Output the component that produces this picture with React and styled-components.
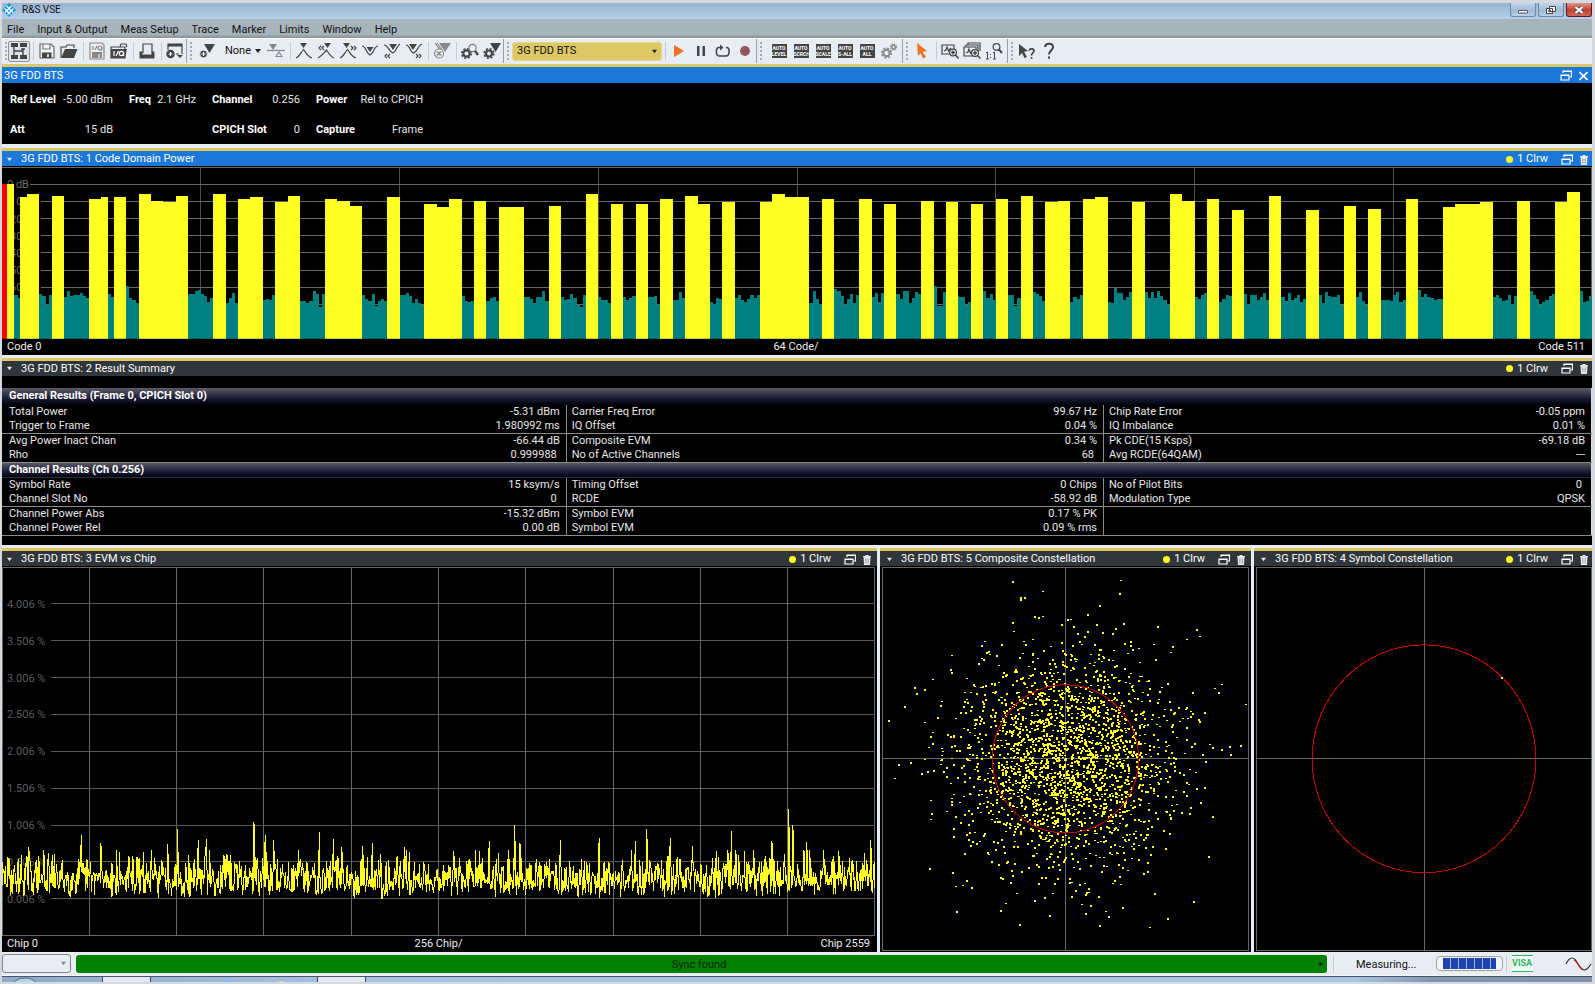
import React from "react";
import styled, { createGlobalStyle, css } from "styled-components";

const GlobalStyle = createGlobalStyle`
  * { box-sizing: border-box; }
  body {
    margin: 0;
    background: #e8edf3;
    font-family: Roboto, "Noto Sans", sans-serif;
    font-size: 11px;
    line-height: 14px;
    color: #111;
  }
  button, select { font: inherit; color: inherit; margin: 0; }
  table { border-collapse: collapse; }
`;

const gold = "#dcc864";
const blue = "#1b78d8";
const yellow = "#ffff26";
const teal = "#008080";
const gridLine = "#686868";
const dark = "#444";

/* ---------- shell ---------- */

const Shell = styled.div`
  min-height: 100vh;
  display: flex;
  flex-direction: column;
  border: solid #d6dade;
  border-width: 3px 3px 2px 2px;
  background: #e8edf3;
`;

const TitleBar = styled.header`
  height: 16px;
  flex: none;
  display: flex;
  align-items: center;
  gap: 6px;
  padding-bottom: 2px;
  background: linear-gradient(#98b4d0, #b6cfea);
`;

const AppName = styled.h1`
  margin: 0;
  flex: 1;
  font-size: 10px;
  font-weight: 400;
`;

const WindowButtons = styled.div`
  display: flex;
  gap: 2px;
  align-self: flex-start;
`;

const WindowButton = styled.button`
  width: 26px;
  height: 14px;
  padding: 0;
  border: 1px solid ${(p) => (p.$close ? "#5c1a20" : "#6f8aa8")};
  border-top: 0;
  border-radius: 0 0 3px 3px;
  background: ${(p) =>
    p.$close
      ? "linear-gradient(#dc9588, #c3402c 55%, #d0695a)"
      : "linear-gradient(#c3d6ec, #9fb9d6 55%, #b7cfe8)"};
  display: flex;
  align-items: center;
  justify-content: center;
`;

const MenuBar = styled.nav`
  height: 19px;
  flex: none;
  display: flex;
  align-items: center;
  gap: 13px;
  padding: 2px 5px 0;
  background: linear-gradient(#a8b4bc 80%, #868f96);
`;

const MenuItem = styled.button`
  border: 0;
  padding: 0;
  background: none;
`;

/* ---------- toolbar ---------- */

const Toolbar = styled.div`
  height: 26px;
  flex: none;
  display: flex;
  padding-bottom: 1px;
  border-top: 1px solid #fff;
`;

const Group = styled.div`
  display: flex;
  align-items: center;
  padding-right: ${(p) => p.$end || 0}px;
  border-right: ${(p) => (p.$last ? 0 : 1)}px solid #98a0a6;
`;

const Grip = styled.span`
  width: 2px;
  height: 19px;
  margin: 0 ${(p) => p.$after || 3}px 0 3px;
  background: repeating-linear-gradient(#a4aab0 0 2px, transparent 2px 4px);
`;

const Sep = styled.span`
  width: 1px;
  height: 18px;
  margin: 0 2px 0 3px;
  background: #c6ccd2;
`;

const ToolButton = styled.button`
  width: 22px;
  height: 21px;
  padding: 0;
  display: flex;
  align-items: center;
  justify-content: center;
  border: 1px solid ${(p) => (p.$active ? "#8c9298" : "transparent")};
  border-radius: 2px;
  background: ${(p) => (p.$active ? "#dfe3e8" : "none")};
  svg { display: block; overflow: visible; flex: none; }
`;

const MarkerSelect = styled.button`
  width: 48px;
  padding: 0 4px 0 8px;
  border: 0;
  background: none;
  display: flex;
  align-items: center;
  justify-content: space-between;
`;

const SelectWrap = styled.label`
  display: grid;
  align-items: center;
  width: ${(p) => p.$width}px;
  height: 19px;
  select, svg { grid-area: 1 / 1; }
  svg { justify-self: end; margin-right: 5px; pointer-events: none; }
`;

const Select = styled.select`
  appearance: none;
  width: 100%;
  height: 19px;
  padding: 0 4px;
  border-radius: 3px;
  border: 1px solid ${(p) => (p.$gold ? "#e4d68c" : "#80868c")};
  background: ${(p) => (p.$gold ? gold : "#e8edf3")};
`;

const AutoLabel = styled.span`
  width: 15px;
  height: 14px;
  padding: 1px 0;
  background: ${dark};
  color: #fff;
  font-size: 5px;
  font-weight: 700;
  line-height: 6px;
  text-align: center;
  overflow: hidden;
  flex: none;
`;

/* ---------- panels ---------- */

const Workspace = styled.main`
  flex: 1;
  display: flex;
  flex-direction: column;
  gap: 3px;
  min-height: 0;
`;

const Panel = styled.section`
  display: flex;
  flex-direction: column;
  min-width: 0;
  min-height: 0;
  background: #000;
  border-top: 3px solid ${gold};
  flex: ${(p) => p.$flex || "none"};
`;

const PanelHead = styled.div`
  height: ${(p) => (p.$channel ? 16 : 15)}px;
  flex: none;
  display: flex;
  align-items: center;
  padding: 1px ${(p) => p.$right || 4}px 0 ${(p) => p.$left || 5}px;
  color: #fff;
  background: ${(p) => (p.$active ? blue : "#30363a")};
  svg { display: block; }
`;

const PanelTitle = styled.h2`
  margin: 0;
  flex: 1;
  padding-left: ${(p) => p.$indent || 0}px;
  font-size: 11px;
  font-weight: 400;
  white-space: nowrap;
`;

const Trace = styled.span`
  display: flex;
  align-items: center;
  gap: 4px;
  margin-right: 13px;
  &::before {
    content: "";
    width: 7px;
    height: 7px;
    border-radius: 50%;
    background: ${yellow};
  }
`;

const HeadButton = styled.button`
  border: 0;
  padding: 0;
  background: none;
  display: flex;
  & + & { margin-left: 7px; }
`;

const ChannelInfo = styled.dl`
  margin: 0;
  padding: 2px 8px 0;
  height: 61px;
  display: grid;
  grid-template-columns: 103px 67px 88px 107px;
  grid-template-rows: 30px 30px;
  column-gap: 16px;
  align-items: center;
  color: #e6e6e6;
`;

const ChannelPanel = styled(Panel)`
  border-bottom: 1px solid #e8edf3;
`;

const Setting = styled.div`
  grid-column: ${(p) => p.$col};
  display: flex;
  justify-content: space-between;
  white-space: nowrap;
  dt { font-weight: 700; color: #fff; }
  dd { margin: 0; }
`;

const PlotArea = styled.div`
  flex: 1;
  min-height: 0;
  display: flex;
  padding: ${(p) => p.$pad || "1px 2px 0 0"};
`;

const PlotSvg = styled.svg`
  flex: 1;
  width: 100%;
  min-width: 0;
  height: 0;
  min-height: 100%;
  display: block;
  font-size: 11px;
`;

const AxisRow = styled.div`
  height: 16px;
  flex: none;
  display: grid;
  grid-template-columns: 1fr auto 1fr;
  align-items: center;
  padding: 0 7px 0 5px;
  color: #eee;
  span:last-child { text-align: right; }
`;

const LowerRow = styled.div`
  flex: 406 1 0;
  min-height: 0;
  display: grid;
  grid-template-columns: 875fr 371fr 338fr;
  grid-template-rows: minmax(0, 1fr);
  gap: 3px;
`;

/* ---------- result table ---------- */

const ResultTable = styled.table`
  width: 100%;
  table-layout: fixed;
  margin: 12px 0 9px;
  color: #e8e8e8;
  border-right: 1px solid #ddd;
`;

const SectionHead = styled.th`
  height: ${(p) => p.$height}px;
  padding: 0 7px 1px;
  text-align: left;
  line-height: 14px;
  color: #fff;
  background: linear-gradient(#5c5c66, #20203a 55%, #000010);
`;

const ResultRow = styled.tr`
  height: 14px;
  ${(p) => p.$rule && css`border-bottom: 1px solid #8a8a8a;`}
  td { padding: 0; line-height: 14px; }
  td + td { border-left: 1px solid #8a8a8a; }
`;

const Result = styled.div`
  display: flex;
  justify-content: space-between;
  padding: 0 6px 0 ${(p) => (p.$first ? 7 : 5)}px;
  height: 14px;
  white-space: nowrap;
`;

const Value = styled.span`
  padding-right: ${(p) => (p.$unitless ? 3 : 0)}px;
`;

/* ---------- status ---------- */

const StatusBar = styled.footer`
  height: 24px;
  flex: none;
  display: flex;
  align-items: center;
  border-bottom: 1px solid #f4f6f8;
`;

const SyncState = styled.output`
  flex: 1;
  height: 18px;
  margin: 0 3px 0 5px;
  padding: 2px 4px 0;
  display: flex;
  align-items: center;
  border-radius: 3px;
  background: #008000;
  span { flex: 1; text-align: center; color: #062806; }
`;

const Measuring = styled.span`
  width: 80px;
  margin-left: 20px;
  padding-top: 2px;
  font-size: 11px;
`;

const Progress = styled.div`
  width: 67px;
  height: 15px;
  padding: 1px 6px;
  border: 1px solid #a0a4a8;
  border-radius: 4px;
  background: #f2f4f6;
  span {
    display: block;
    height: 100%;
    background: repeating-linear-gradient(90deg, #1f45b0 0 7px, #9fb0dc 7px 8px);
  }
`;

const Visa = styled.span`
  width: 21px;
  height: 17px;
  margin: 0 32px 0 3px;
  border: solid #2fb35c;
  border-width: 1px 0;
  background: #f6fbf8;
  color: #2fb35c;
  font-size: 9px;
  font-weight: 700;
  line-height: 15px;
  overflow: hidden;
`;

const TaskBar = styled.div`
  height: 6px;
  flex: none;
  display: flex;
  border-top: 1px solid #4a5560;
  background: linear-gradient(90deg, #8fa9cc, #a4c0e4 20%, #a9c4e6 85%, #8095b2 90%, #7f93b0);
  padding-left: 10px;
  overflow: hidden;
  svg { display: block; flex: none; }
`;

const TaskItem = styled.span`
  width: 49px;
  margin-left: ${(p) => p.$gap}px;
  border: solid #3c4654;
  border-width: 0 1px;
  background: #e2e8f4;
`;

/* ---------- icons ---------- */

const Icon = ({ children, w = 18, h = 18, color = dark }) => (
  <svg width={w} height={h} viewBox={`0 0 ${w} ${h}`} fill="none" stroke={color} strokeWidth="1.2" aria-hidden="true">
    {children}
  </svg>
);

const Caret = ({ size = 6, color = "#222" }) => (
  <svg width={size} height={size} viewBox="0 0 6 6" aria-hidden="true">
    <path d="M0 1h6L3 5z" fill={color} />
  </svg>
);

const tri = "M5 1h8l-4 6z";

const icons = {
  layout: (
    <Icon>
      <path d="M1 1h7v4H1zM10 1h7v4h-7zM1 13h7v4H1zM10 13h7v4h-7z" fill={dark} stroke="none" />
      <path d="M4 5v8M4 9h9M13 7v6M11 7h4" strokeWidth="1.400" />
    </Icon>
  ),
  save: (
    <Icon>
      <path d="M2 2h11l3 3v11H2z" stroke="#666" fill="#f4f4f4" />
      <path d="M4 10.500h9.500V16H4z" fill={dark} stroke="none" />
      <path d="M5 2v5h7V2" stroke="#777" />
      <path d="M10 12v3" stroke="#fff" strokeWidth="1.600" />
    </Icon>
  ),
  open: (
    <Icon>
      <path d="M1 16V5h5l1-2h7v3" stroke={dark} />
      <path d="M1 16 5 7h12.500L14 16z" fill={dark} stroke="none" />
    </Icon>
  ),
  iqSave: (
    <Icon color="#888">
      <path d="M2 1h12l2 2v14H2z" fill="#eee" />
      <path d="M4 10h10v6H4z" fill="#888" stroke="none" />
      <path d="M5 4v4M7 8l2-4M14 8l-1-1.500" />
      <circle cx="12" cy="6" r="2" />
      <path d="M11 12v4" stroke="#eee" />
    </Icon>
  ),
  iqOpen: (
    <Icon>
      <path d="M1 5h14v11H1zM10 5l1-3h5l1 3" />
      <path d="M1 7h16l-2 9H1z" fill={dark} stroke="none" />
      <path d="M4 9v5M6 14l2.500-5M14 14l-1.500-2" stroke="#fff" />
      <circle cx="11.500" cy="11.500" r="2.200" stroke="#fff" />
    </Icon>
  ),
  print: (
    <Icon>
      <path d="M5 11V2h9v9" />
      <path d="M1.500 9.500v7h15v-7h-3v3h-9v-3z" fill={dark} stroke="none" />
    </Icon>
  ),
  addWindow: (
    <Icon>
      <path d="M2 2h14v2H2z" fill={dark} />
      <path d="M16 4v8M2 4v4M10 12h3" />
      <circle cx="4.500" cy="12" r="3.600" fill={dark} />
      <path d="M2.500 12h4M4.500 10v4" stroke="#fff" />
      <path d="M11 13h6l-3 3z" fill={dark} stroke="none" />
    </Icon>
  ),
  addMarker: (
    <Icon>
      <path d="M7 2h11l-5.500 9z" fill={dark} stroke="none" />
      <circle cx="6.500" cy="12" r="3.800" fill={dark} stroke="#e8edf3" strokeWidth=".8" />
      <path d="M4.500 12h4M6.500 10v4" stroke="#fff" />
    </Icon>
  ),
  delta: (
    <Icon color="#888">
      <path d="M0 8.500h18" />
      <path d="M2 2h8L6 8z" fill="#888" stroke="none" />
      <path d="M12 10l3 4.500H9z" />
    </Icon>
  ),
  peak: (
    <Icon>
      <path d="M5 1h7L8.500 6z" fill={dark} stroke="none" />
      <path d="M1 16c3-1 4-4 7.500-8.500C12 12 13 15 17 16" />
    </Icon>
  ),
  peakLeft: (
    <Icon>
      <path d="M7 1h7l-3.500 5z" fill={dark} stroke="none" />
      <path d="M1 16c4-2 5-4 8.500-8C12 12 14 15 17 16M4 4 2 6l2 2M7 4 5 6l2 2" />
    </Icon>
  ),
  peakRight: (
    <Icon>
      <path d="M4 1h7L7.500 6z" fill={dark} stroke="none" />
      <path d="M1 16c3-1 4-4 7.500-8.500C12 12 13 15 17 16M12 4l2 2-2 2M15 4l2 2-2 2" />
    </Icon>
  ),
  min: (
    <Icon>
      <path d="M5.500 5h7L9 10z" fill={dark} stroke="none" />
      <path d="M1 4c4 0 4 7 8 9 4-2 4-9 8-9" />
    </Icon>
  ),
  minLeft: (
    <Icon>
      <path d={tri} fill={dark} stroke="none" transform="translate(1 1)" />
      <path d="M1 3c4 0 5 7 9 8 4-2 4-8 7-9M4 12l-2 2 2 2M7 12l-2 2 2 2" />
    </Icon>
  ),
  minRight: (
    <Icon>
      <path d={tri} fill={dark} stroke="none" transform="translate(-1 1)" />
      <path d="M1 3c4 0 4 7 7 8 4 0 5-8 9-9M11 12l2 2-2 2M14 12l2 2-2 2" />
    </Icon>
  ),
  clearMarkers: (
    <Icon color="#888">
      <path d="M6 1h12l-6 9z" fill="#888" stroke="none" />
      <path d="M2 1l5 7M4 1l5 7" />
      <circle cx="6" cy="11.500" r="4.500" fill="#eee" />
      <path d="M4 9.500l4 4M8 9.500l-4 4" strokeWidth="1.600" />
    </Icon>
  ),
  gearSearch: (
    <Icon>
      <circle cx="5.500" cy="11.500" r="3.200" strokeWidth="2.200" />
      <circle cx="5.500" cy="11.500" r="4.800" strokeDasharray="2 1.770" strokeWidth="1.600" />
      <circle cx="11.500" cy="6" r="3.600" fill="#f4f4f4" stroke="#777" />
      <path d="M14 9l3 4" strokeWidth="2.200" />
    </Icon>
  ),
  gearMarker: (
    <Icon>
      <path d="M7 1h11l-5.500 9z" fill={dark} stroke="none" />
      <circle cx="6" cy="11.500" r="3" strokeWidth="2.200" fill="#e8edf3" />
      <circle cx="6" cy="11.500" r="4.800" strokeDasharray="2 1.770" strokeWidth="1.600" />
    </Icon>
  ),
  play: <Icon><path d="M4 3l10 6-10 6z" fill="#f37021" stroke="none" /></Icon>,
  pause: <Icon><path d="M5 4h2.500v10H5zM10.500 4H13v10h-2.500z" fill={dark} stroke="none" /></Icon>,
  loop: (
    <Icon>
      <path d="M6 5.500H5C1.500 5.500 1.500 14 5 14h7c4 0 4-8.500 1-8.500h-1" strokeWidth="1.600" />
      <path d="M6 2.500v6L9.500 5.500z" fill={dark} stroke="none" />
    </Icon>
  ),
  record: <Icon><circle cx="9" cy="9" r="5" fill="#955560" stroke="none" /></Icon>,
  gears: (
    <Icon color="#888">
      <circle cx="6.500" cy="11" r="3.200" strokeWidth="2" />
      <circle cx="6.500" cy="11" r="4.800" strokeDasharray="2 1.770" strokeWidth="1.600" />
      <circle cx="13.500" cy="5" r="1.800" strokeWidth="1.400" />
      <circle cx="13.500" cy="5" r="3" strokeDasharray="1.400 .96" strokeWidth="1.200" />
    </Icon>
  ),
  pointer: <Icon><path d="M4 1l10 8-4.500.8L13 15l-3 1.500L7.500 11 5 14z" fill="#f37021" stroke="none" /></Icon>,
  zoom: (
    <Icon>
      <path d="M1 3h12v9H1zM3 9l2-1 1-3 1.500 4L10 6" />
      <circle cx="12" cy="10.500" r="3.400" fill="#f4f4f4" />
      <path d="M10 10.500h4M12 8.500v4M14.500 13l3 3.500" strokeWidth="1.500" />
    </Icon>
  ),
  multiZoom: (
    <Icon>
      <path d="M3 5V3h12v8M5 3V1h12v8M1 5h12v9H1zM3 11l2-1 1-3 1.500 4L10 8" />
      <circle cx="12" cy="11" r="3.400" fill="#f4f4f4" />
      <path d="M10 11h4M12 9v4M14.500 13.500l3 3" strokeWidth="1.500" />
    </Icon>
  ),
  zoomOff: (
    <Icon>
      <circle cx="11.500" cy="5" r="3.400" />
      <path d="M14 7.500l3 3.500" strokeWidth="2" />
      <path d="M1 11l1.500-1v7M1 17h3M8 11l1.500-1v7M8 17h3M5.500 12v1M5.500 15v1" strokeWidth="1" />
    </Icon>
  ),
  whatsThis: (
    <Icon>
      <path d="M1 2l9 7-4 .7L9 15l-2.500 1L4 11l-3 3z" fill={dark} stroke="none" />
      <path d="M11 8.500c1-2.500 5-2 5 .5 0 2-2.500 2-2.500 4.500M13.500 15v1.800" strokeWidth="1.700" />
    </Icon>
  ),
  help: (
    <Icon>
      <path d="M5 5c.6-4.500 8-4 8 0 0 3.500-4 3.500-4 7.500M9 14.500v2.300" strokeWidth="2" />
    </Icon>
  ),
};

const Cascade = () => (
  <Icon w={12} h={11} color="#fff">
    <path d="M3 3V1h8.500v6H9.500M3 1.500h8.500" />
    <path d="M1 5h8v5H1zM1 5.500h8" />
  </Icon>
);

const Trash = () => (
  <Icon w={8} h={11} color="#e8e8e8">
    <path d="M0 2.500h8M2.500 1.500h3" />
    <path d="M.5 3h7L7 11H1z" fill="#e8e8e8" stroke="none" />
    <path d="M2.800 4.500v5M5.200 4.500v5" stroke="#888" strokeWidth=".8" />
  </Icon>
);

const Logo = () => (
  <svg width="14" height="14" viewBox="0 0 14 14" aria-hidden="true">
    <path d="M7 0l7 7-7 7-7-7z" fill="#159bd7" />
    <path d="M4.500 3l6.500 6.500M2.500 5.500L8.500 11.500M9.500 3L3 9.500M11.500 5.500l-6 6" stroke="#fff" strokeWidth="1.100" />
  </svg>
);

/* ---------- data ---------- */

const random = (seed) => {
  let s = seed;
  return () => {
    s = (s * 1664525 + 1013904223) % 4294967296;
    return s / 4294967296;
  };
};

// [first slot, width in slots, level below 0 dB]; one slot is four codes
const activeCodes = [
  [0.42, 0.58, 0], [1.41, 0.59, 7.5], [2, 1, 5.7], [4, 1, 6.9], [7, 1, 8.6], [8, 0.5, 7.5], [9, 1, 7.5],
  [11, 1, 5.7], [12, 1, 9.8], [13, 1, 10.4], [14, 1, 6.9], [17, 1, 5.7], [19, 1, 8.6], [20, 1, 7.5],
  [22, 1, 10.4], [23, 1, 6.9], [26, 1, 8.6], [27, 1, 9.8], [28, 1, 12.7], [31, 1, 7.5], [34, 1, 11.6],
  [35, 1, 13.3], [36, 1, 8.6], [38, 1, 9.8], [40, 2, 13.3], [44, 1, 12.7], [47, 1, 5.7], [49, 1, 11.6],
  [51, 1, 11.6], [53, 1, 8.6], [55, 1, 6.9], [56, 1, 11.6], [58, 1, 10.4], [61, 1, 10.4], [62, 1, 5.7],
  [63, 2, 7.5], [66, 1, 8.6], [69, 1, 8.6], [71, 1, 11.6], [74, 1, 9.8], [76, 1, 10.4], [78, 1, 11.6],
  [80, 1, 8.6], [82, 1, 6.9], [84, 1, 10.4], [85, 1, 9.8], [87, 1, 8.6], [88, 1, 7.5], [91, 1, 10.4],
  [94, 1, 5.7], [95, 1, 9.8], [97, 1, 8.6], [99, 1, 15.1], [102, 1, 6.9], [105, 1, 15.1], [108, 1, 12.7],
  [110, 1, 14.5], [113, 1, 8.6], [116, 1, 13.3], [117, 2, 11.6], [119, 1, 10.4], [122, 1, 9.8],
  [125, 1, 10.4], [126, 1, 4.5],
];

const noiseCodes = (() => {
  const r = random(11);
  return Array.from({ length: 512 }, () => 66 + (r() + r() + r() - 1.5) * 5);
})();

// tallest spikes of the trace: [x, EVM in percent], x over a width of 873
const spikes = [
  [27, 0.7], [42, 0.66], [79, 0.86], [99, 0.76], [166, 0.74], [176, 0.94], [196, 0.8], [204, 0.81],
  [252, 1.04], [263, 0.86], [272, 0.8], [317, 0.9], [331, 0.81], [340, 0.7], [361, 0.72], [370, 0.75],
  [403, 0.7], [487, 0.79], [513, 1.0], [518, 0.75], [559, 0.8], [597, 0.83], [633, 0.78], [645, 0.94],
  [668, 0.83], [690, 0.72], [729, 0.92], [770, 0.78], [787, 1.22], [791, 1.0], [805, 0.77], [822, 0.66],
  [869, 0.8],
];

const evmPath = (() => {
  const r = random(29);
  const pts = [];
  for (let i = 0; i <= 1500; i += 1) {
    const x = (i * 873) / 1500;
    let v = Math.min(0.23 * Math.sqrt(-2 * Math.log(1 - r())), 0.66);
    const spike = spikes.find(([sx]) => Math.abs(sx - x) < 0.3);
    if (spike) v = spike[1];
    pts.push(`${x.toFixed(1)} ${(333 - v * 74).toFixed(1)}`);
  }
  return `M${pts.join("L")}`;
})();

const constellationPath = (() => {
  const r = random(5);
  let d = "";
  for (let i = 0; i < 2400; i += 1) {
    const radius = (i % 4 ? 57 : 48) * Math.sqrt(-2 * Math.log(1 - r()));
    const a = r() * Math.PI * 2;
    const x = Math.round(radius * Math.cos(a));
    const y = Math.round(radius * Math.sin(a));
    if (Math.abs(x) < 181 && Math.abs(y) < 180) d += `M${x} ${y}h2v${r() > 0.3 ? 2 : 1}h-2z`;
  }
  return d;
})();

const generalRows = [
  [["Total Power", "-5.31 dBm"], ["Carrier Freq Error", "99.67 Hz"], ["Chip Rate Error", "-0.05 ppm"]],
  [["Trigger to Frame", "1.980992 ms"], ["IQ Offset", "0.04 %"], ["IQ Imbalance", "0.01 %"]],
  [["Avg Power Inact Chan", "-66.44 dB"], ["Composite EVM", "0.34 %"], ["Pk CDE(15 Ksps)", "-69.18 dB"]],
  [["Rho", "0.999988"], ["No of Active Channels", "68"], ["Avg RCDE(64QAM)", "---"]],
];

const channelRows = [
  [["Symbol Rate", "15 ksym/s"], ["Timing Offset", "0 Chips"], ["No of Pilot Bits", "0"]],
  [["Channel Slot No", "0"], ["RCDE", "-58.92 dB"], ["Modulation Type", "QPSK"]],
  [["Channel Power Abs", "-15.32 dBm"], ["Symbol EVM", "0.17 % PK"], ["", ""]],
  [["Channel Power Rel", "0.00 dB"], ["Symbol EVM", "0.09 % rms"], ["", ""]],
];

const settings = [
  ["Ref Level", "-5.00 dBm", 1], ["Freq", "2.1 GHz", 2], ["Channel", "0.256", 3], ["Power", "Rel to CPICH", 4],
  ["Att", "15 dB", 1], ["CPICH Slot", "0", 3], ["Capture", "Frame", 4],
];

const menus = ["File", "Input & Output", "Meas Setup", "Trace", "Marker", "Limits", "Window", "Help"];

/* ---------- pieces ---------- */

const Tool = ({ name, label, active }) => (
  <ToolButton type="button" aria-label={label} $active={active}>{icons[name]}</ToolButton>
);

const AutoTool = ({ word }) => (
  <ToolButton type="button"><AutoLabel>AUTO<br />{word}</AutoLabel></ToolButton>
);

const Head = ({ title, active, left, right }) => (
  <PanelHead $active={active} $left={left} $right={right}>
    <Caret color="#e8e8e8" size={5} />
    <PanelTitle $indent={9}>{title}</PanelTitle>
    <Trace>1 Clrw</Trace>
    <HeadButton type="button" aria-label="Detach"><Cascade /></HeadButton>
    <HeadButton type="button" aria-label="Delete"><Trash /></HeadButton>
  </PanelHead>
);

const steps = (n) => Array.from({ length: n }, (_, i) => i);

const FrameRect = styled.rect`
  width: calc(100% - 1px);
  height: calc(100% - 1px);
  fill: none;
  stroke: ${gridLine};
`;

const CodeDomainPlot = () => (
  <PlotSvg role="img" aria-label="Code domain power" shapeRendering="crispEdges">
    <line x2="100%" y1="0.500" y2="0.500" stroke={gridLine} />
    <line x1="100%" x2="100%" y2="100%" stroke={gridLine} strokeWidth="2" />
    {steps(7).map((i) => (
      <line key={i} x1={`${(i + 1) * 12.5}%`} x2={`${(i + 1) * 12.5}%`} y1="0" y2="100%" stroke="#505050" />
    ))}
    {steps(9).map((i) => (
      <g key={i}>
        <line x1={i ? 39 : 28} x2="100%" y1={`${(i + 1) * 10}%`} y2={`${(i + 1) * 10}%`} stroke={gridLine} />
        <text x="5" y={`${(i + 1) * 10}%`} dy="4" fill="#6a6a6a">{i ? `-${i}0 dB` : "0 dB"}</text>
      </g>
    ))}
    <svg width="100%" height="100%" viewBox="0 0 512 100" preserveAspectRatio="none">
      <path d={noiseCodes.map((v, i) => (i < 4 ? "" : `M${i} 100V${10 + v}h1.010V100z`)).join("")} fill={teal} />
      <path d={activeCodes.map(([s, w, v]) => `M${s * 4} 100V${10 + v}h${w * 4}V100z`).join("")} fill={yellow} />
      <path d="M0 10h1.680v90H0z" fill="#f00" />
    </svg>
  </PlotSvg>
);

const EvmPlot = () => (
  <PlotSvg role="img" aria-label="EVM versus chip">
    <g shapeRendering="crispEdges">
      <FrameRect x="0.500" y="0.500" />
      {steps(9).map((i) => (
        <g key={i}>
          <line x1={`${(i + 1) * 10}%`} x2={`${(i + 1) * 10}%`} y1="0" y2="100%" stroke={gridLine} />
          <line x1="49" x2="100%" y1={`${(i + 1) * 10}%`} y2={`${(i + 1) * 10}%`} stroke="#585858" />
        </g>
      ))}
    </g>
    {steps(9).map((i) => (
      <text key={i} x="5" y={`${(i + 1) * 10}%`} dy="4" fill="#5c5c5c">{`${(4.006 - i / 2).toFixed(3)} %`}</text>
    ))}
    <svg width="100%" height="100%" viewBox="0 0 873 370" preserveAspectRatio="none">
      <path d={evmPath} fill="none" stroke={yellow} strokeWidth="1" vectorEffect="non-scaling-stroke" shapeRendering="crispEdges" />
    </svg>
  </PlotSvg>
);

const ConstellationPlot = ({ label, rx, ry, points, marker }) => (
  <PlotSvg role="img" aria-label={label}>
    <g shapeRendering="crispEdges">
      <FrameRect x="0.500" y="0.500" />
      <line x1="50%" x2="50%" y2="100%" stroke={gridLine} />
      <line x2="100%" y1="50%" y2="50%" stroke={gridLine} />
      {points && <svg x="50%" y="50%" overflow="visible"><path d={points} fill={yellow} /></svg>}
      <ellipse cx="50%" cy="50%" rx={rx} ry={ry} fill="none" stroke="#c80000" />
      {marker && <rect x={marker[0]} y={marker[1]} width="2" height="2" fill={yellow} />}
    </g>
  </PlotSvg>
);

const ResultRows = ({ rows }) =>
  rows.map((row, i) => (
    <ResultRow key={row[0][0]} $rule={i % 2 === 1}>
      {row.map(([name, value], c) => (
        <td key={c}>
          <Result $first={c === 0}>
            <span>{name}</span>
            <Value $unitless={/^[\d.]+$/.test(value)}>{value}</Value>
          </Result>
        </td>
      ))}
    </ResultRow>
  ));

const Col = styled.col`
  width: ${(p) => p.$width || "auto"};
`;

export default function App() {
  return (
    <Shell>
      <GlobalStyle />
      <TitleBar>
        <Logo />
        <AppName>R&amp;S VSE</AppName>
        <WindowButtons>
          <WindowButton type="button" aria-label="Minimize">
            <svg width="10" height="10" viewBox="0 0 10 10"><path d="M.5 5.500h9v2.500h-9z" fill="#fff" stroke="#555" /></svg>
          </WindowButton>
          <WindowButton type="button" aria-label="Restore">
            <svg width="10" height="10" viewBox="0 0 10 10"><path d="M3.500 1.500h6v5h-6zM.5 3.500h6v5h-6zM2.500 5.500h2v1h-2z" fill="#fff" stroke="#444" /></svg>
          </WindowButton>
          <WindowButton type="button" aria-label="Close" $close>
            <svg width="10" height="10" viewBox="0 0 10 10"><path d="M1.500 2l7 6M8.500 2l-7 6" stroke="#555" strokeWidth="4" /><path d="M1.500 2l7 6M8.500 2l-7 6" stroke="#fff" strokeWidth="2.200" /></svg>
          </WindowButton>
        </WindowButtons>
      </TitleBar>
      <MenuBar>
        {menus.map((m) => <MenuItem key={m} type="button">{m}</MenuItem>)}
      </MenuBar>
      <Toolbar>
        <Group>
          <Grip $after={1} />
          <Tool name="layout" label="Layout" active />
          <Sep />
          <Tool name="save" label="Save" />
          <Tool name="open" label="Open" />
          <Sep />
          <Tool name="iqSave" label="Save I/Q" />
          <Tool name="iqOpen" label="Open I/Q" />
          <Sep />
          <Tool name="print" label="Print" />
          <Sep />
          <Tool name="addWindow" label="Add window" />
        </Group>
        <Group>
          <Grip />
          <Tool name="addMarker" label="Add marker" />
          <MarkerSelect type="button">None <Caret /></MarkerSelect>
          <Tool name="delta" label="Delta marker" />
          <Sep />
          <Tool name="peak" label="Peak" />
          <Tool name="peakLeft" label="Next peak left" />
          <Tool name="peakRight" label="Next peak right" />
          <Tool name="min" label="Minimum" />
          <Tool name="minLeft" label="Next minimum left" />
          <Tool name="minRight" label="Next minimum right" />
          <Sep />
          <Tool name="clearMarkers" label="Clear markers" />
          <Sep />
          <Tool name="gearSearch" label="Search settings" />
          <Tool name="gearMarker" label="Marker settings" />
        </Group>
        <Group>
          <Grip />
          <SelectWrap $width={150}>
            <Select $gold aria-label="Channel" defaultValue="3G FDD BTS"><option>3G FDD BTS</option></Select>
            <Caret size={5} />
          </SelectWrap>
          <Sep />
          <Tool name="play" label="Run" />
          <Tool name="pause" label="Pause" />
          <Tool name="loop" label="Continuous" />
          <Tool name="record" label="Record" />
        </Group>
        <Group $end={2}>
          <Grip $after={6} />
          <AutoTool word="LEVEL" />
          <AutoTool word="SCRCH" />
          <AutoTool word="SCALE" />
          <AutoTool word="S-ALL" />
          <AutoTool word="ALL" />
          <Tool name="gears" label="Auto settings" />
        </Group>
        <Group $end={2}>
          <Grip />
          <Tool name="pointer" label="Select" />
          <Sep />
          <Tool name="zoom" label="Zoom" />
          <Tool name="multiZoom" label="Multi zoom" />
          <Tool name="zoomOff" label="Zoom off" />
        </Group>
        <Group $last>
          <Grip />
          <Tool name="whatsThis" label="What is this" />
          <Tool name="help" label="Help" />
        </Group>
      </Toolbar>

      <Workspace>
        <ChannelPanel>
          <PanelHead $active $channel $left={2}>
            <PanelTitle>3G FDD BTS</PanelTitle>
            <HeadButton type="button" aria-label="Detach"><Cascade /></HeadButton>
            <HeadButton type="button" aria-label="Close channel">
              <Icon w={9} h={10} color="#fff"><path d="M.5 1l8 8M8.500 1l-8 8" strokeWidth="1.600" /></Icon>
            </HeadButton>
          </PanelHead>
          <ChannelInfo>
            {settings.map(([name, value, col]) => (
              <Setting key={name} $col={col}><dt>{name}</dt><dd>{value}</dd></Setting>
            ))}
          </ChannelInfo>
        </ChannelPanel>

        <Panel $flex="205 1 0">
          <Head title="3G FDD BTS: 1 Code Domain Power" active />
          <PlotArea $pad="1px 0 0"><CodeDomainPlot /></PlotArea>
          <AxisRow><span>Code 0</span><span>64 Code/</span><span>Code 511</span></AxisRow>
        </Panel>

        <Panel>
          <Head title="3G FDD BTS: 2 Result Summary" />
          <ResultTable>
            <colgroup>
              <Col $width="35.5%" />
              <Col $width="33.8%" />
              <Col />
            </colgroup>
            <tbody>
              <tr><SectionHead colSpan={3} $height={17}>General Results (Frame 0, CPICH Slot 0)</SectionHead></tr>
              <ResultRows rows={generalRows} />
              <tr><SectionHead colSpan={3} $height={16}>Channel Results (Ch 0.256)</SectionHead></tr>
              <ResultRows rows={channelRows} />
            </tbody>
          </ResultTable>
        </Panel>

        <LowerRow>
          <Panel>
            <Head title="3G FDD BTS: 3 EVM vs Chip" right={6} />
            <PlotArea><EvmPlot /></PlotArea>
            <AxisRow><span>Chip 0</span><span>256 Chip/</span><span>Chip 2559</span></AxisRow>
          </Panel>
          <Panel>
            <Head title="3G FDD BTS: 5 Composite Constellation" left={7} right={6} />
            <PlotArea $pad="1px 2px">
              <ConstellationPlot label="Composite constellation" rx="19.9%" ry="19.3%" points={constellationPath} />
            </PlotArea>
          </Panel>
          <Panel>
            <Head title="3G FDD BTS: 4 Symbol Constellation" left={7} />
            <PlotArea $pad="1px 0 1px 2px">
              <ConstellationPlot label="Symbol constellation" rx="33.3%" ry="29.7%" marker={["73%", "28.7%"]} />
            </PlotArea>
          </Panel>
        </LowerRow>
      </Workspace>

      <StatusBar>
        <SelectWrap $width={69}>
          <Select aria-label="Source" defaultValue=""><option value="" /></Select>
          <Caret size={5} color="#888" />
        </SelectWrap>
        <SyncState><span>Sync found</span><Caret size={5} /></SyncState>
        <Sep />
        <Measuring>Measuring...</Measuring>
        <Progress role="progressbar" aria-label="Measurement"><span /></Progress>
        <Sep />
        <Visa>VISA</Visa>
        <svg width="27" height="14" viewBox="0 0 27 14" fill="none" aria-hidden="true">
          <path d="M1 7C5-1 9-1 13 7s8 8 13 0" stroke="#333" strokeWidth="1.200" />
          <path d="M9 2.500c1 1 3 3 4 4.500s3 4 4.500 5" stroke="#c22" strokeWidth="1.200" />
        </svg>
      </StatusBar>
      <TaskBar>
        <svg width="60" height="6" viewBox="0 0 60 6">
          <ellipse cx="13" cy="7" rx="11" ry="6" fill="#b8d4e8" stroke="#4e7288" />
        </svg>
        <TaskItem $gap={30} />
        <svg width="166" height="6" viewBox="0 0 166 6">
          <ellipse cx="78" cy="6" rx="6" ry="2" fill="#62c8f0" />
          <ellipse cx="130" cy="6" rx="5" ry="2" fill="#d8dcae" />
        </svg>
        <TaskItem $gap={0} />
      </TaskBar>
    </Shell>
  );
}
